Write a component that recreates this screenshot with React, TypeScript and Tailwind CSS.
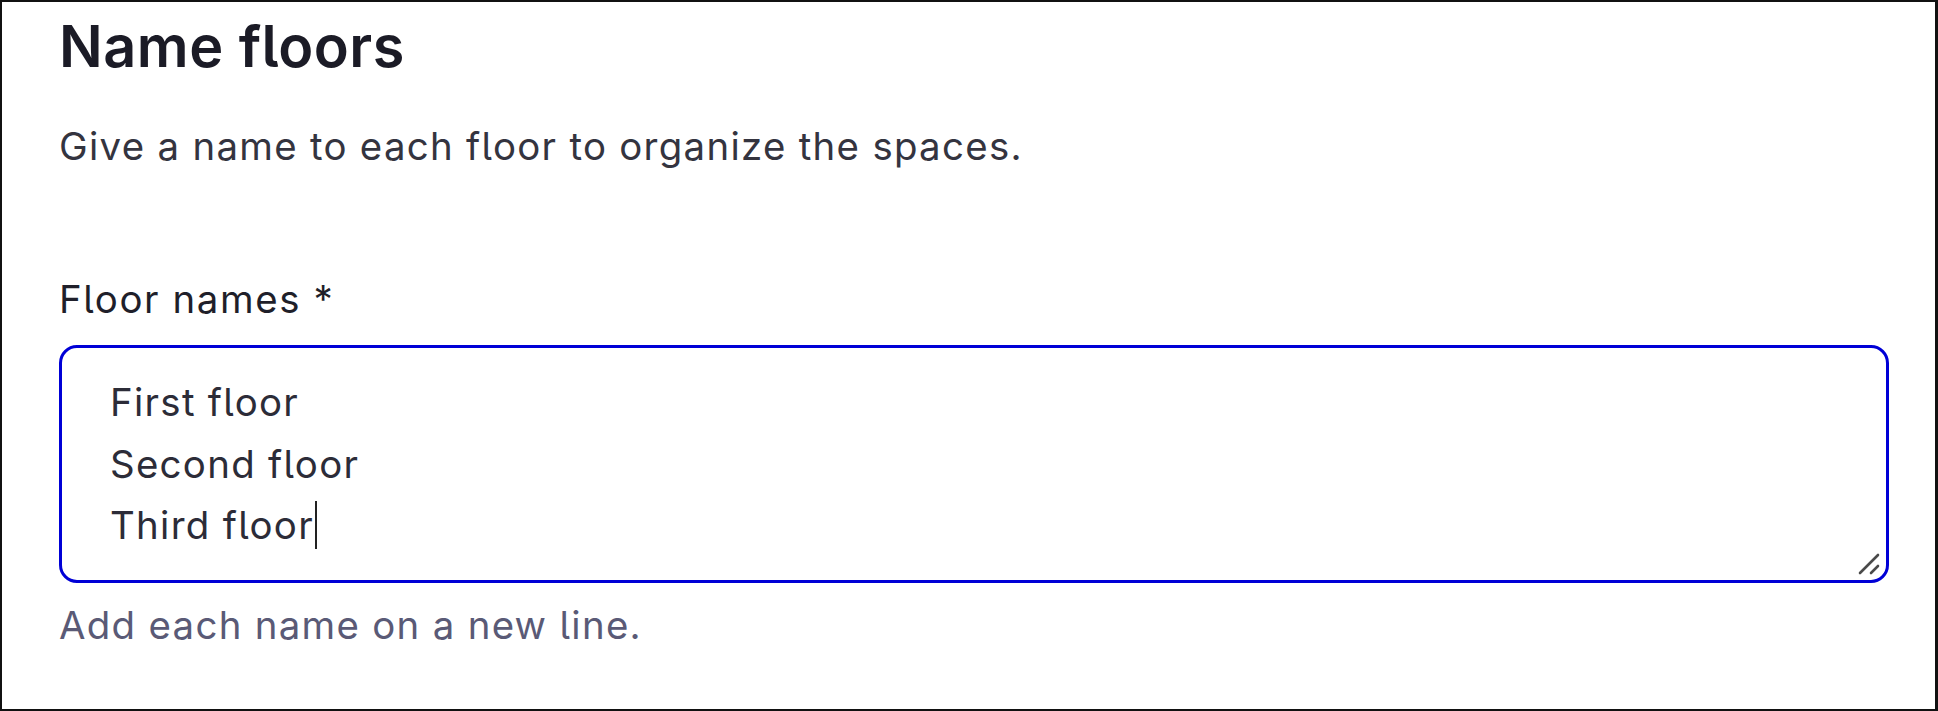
import { ReactNode } from "react"

type FieldProps = {
    label: string;
    hint: string;
    lines: string[];
}

// Alça de redimensionar, desenhada no canto do campo
const ResizeGrip = () => (
    <svg className="absolute right-[4px] bottom-[3px]" width="26" height="26" viewBox="0 0 26 26">
        <line x1="22" y1="4" x2="4" y2="22" stroke="#4a4a4a" strokeWidth="2.6" strokeLinecap="round" />
        <line x1="22" y1="15" x2="15" y2="22" stroke="#4a4a4a" strokeWidth="2.6" strokeLinecap="round" />
    </svg>
)

const Caret = () => <span className="inline-block w-[2px] h-[48px] ml-[1px] bg-[#222] align-[-10px]" />

const TextAreaField = ({ label, hint, lines }: FieldProps) => {

    const rows: ReactNode[] = lines.map((line, i) => (
        <div key={i} className="h-[61.5px]">
            {line}
            {i === lines.length - 1 && <Caret />}
        </div>
    ))

    return (
        <div className="flex flex-col">
            <label className="text-[38.4px] leading-[58px] font-normal tracking-[1.6px] text-[#1f1f2a]">{label}</label>

            <div className="relative mt-[17px] h-[238px] border-[3px] border-[#0000d6] rounded-[18px] px-[48px] py-[24px] text-[38.4px] leading-[61.5px] tracking-[1.3px] text-[#2c2c38]">
                {rows}
                <ResizeGrip />
            </div>

            <p className="mt-[13px] text-[38.4px] leading-[58px] tracking-[1.3px] text-[#5a5a76]">{hint}</p>
        </div>
    )
}

export default function App() {

    return (
        <div className="w-[1938px] h-[711px] bg-white font-['Inter','Liberation_Sans',sans-serif] [font-feature-settings:'cv05']">
            <section className="h-full border-2 border-r-[3px] border-[#111] pl-[57px] pr-[46px] pt-[9px]">

                <h1 className="text-[57.6px] leading-[70px] font-semibold tracking-[0.5px] text-[#1b1b26]">Name floors</h1>

                <p className="mt-[36px] text-[38.4px] leading-[58px] tracking-[1.3px] text-[#34343f]">
                    Give a name to each floor to organize the spaces.
                </p>

                <div className="mt-[95px]">
                    <TextAreaField
                        label="Floor names *"
                        hint="Add each name on a new line."
                        lines={["First floor", "Second floor", "Third floor"]}
                    />
                </div>

            </section>
        </div>
    )
}
